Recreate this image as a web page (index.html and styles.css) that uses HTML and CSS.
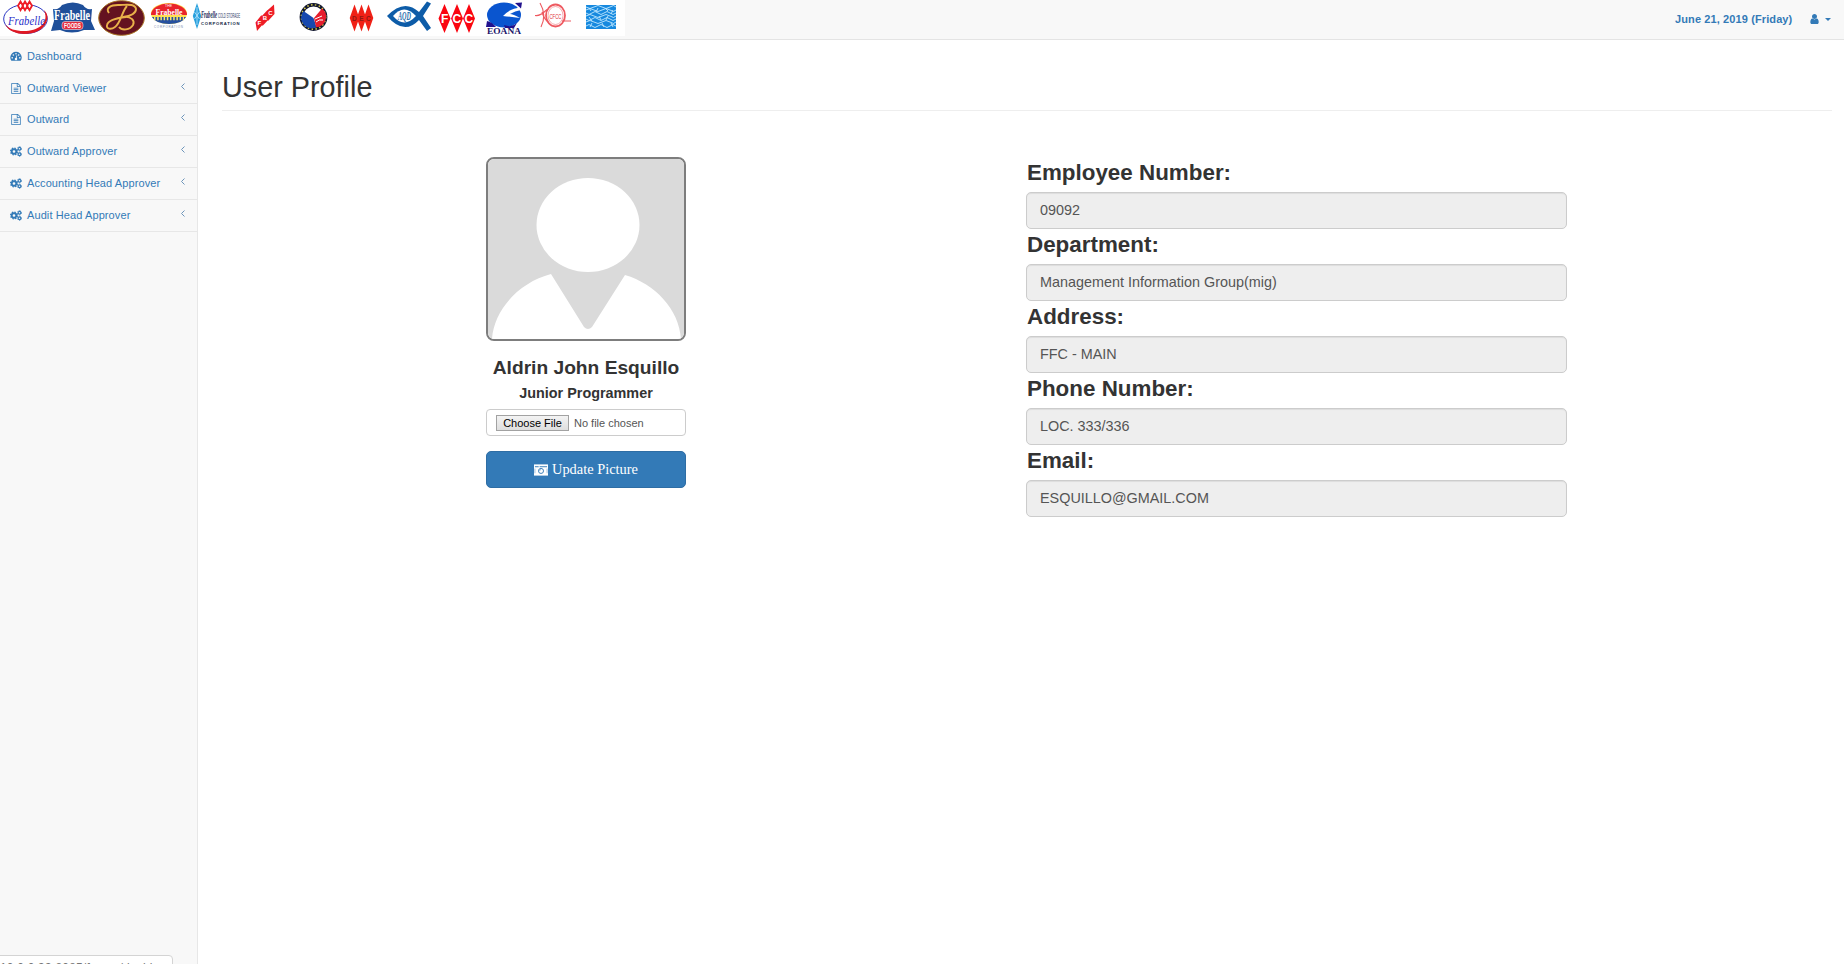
FILE: index.html
```html
<!DOCTYPE html>
<html lang="en">
<head>
<meta charset="utf-8">
<title>User Profile</title>
<link rel="stylesheet" href="styles.css">
</head>
<body>
<svg width="0" height="0" class="defs">
  <symbol id="file" viewBox="0 0 1792 1792"><path d="M1596 380q28 28 48 76t20 88v1152q0 40-28 68t-68 28h-1344q-40 0-68-28t-28-68v-1600q0-40 28-68t68-28h896q40 0 88 20t76 48zm-444-244v376h376q-10-29-22-41l-313-313q-12-12-41-22zm384 1528v-1024h-416q-40 0-68-28t-28-68v-416h-768v1536h1280zm-1024-864q0-14 9-23t23-9h704q14 0 23 9t9 23v64q0 14-9 23t-23 9h-704q-14 0-23-9t-9-23v-64zm736 224q14 0 23 9t9 23v64q0 14-9 23t-23 9h-704q-14 0-23-9t-9-23v-64q0-14 9-23t23-9h704zm0 256q14 0 23 9t9 23v64q0 14-9 23t-23 9h-704q-14 0-23-9t-9-23v-64q0-14 9-23t23-9h704z"/></symbol>
  <symbol id="cogs" viewBox="0 0 24 22"><g fill="none" stroke="currentColor"><circle cx="8" cy="11" r="4.500" stroke-width="3.600"/><circle cx="8" cy="11" r="6.900" stroke-width="2.400" stroke-dasharray="3 2.420"/><circle cx="19" cy="5.500" r="2.700" stroke-width="2.200"/><circle cx="19" cy="5.500" r="4.200" stroke-width="1.500" stroke-dasharray="2.400 2"/><circle cx="19" cy="16.500" r="2.700" stroke-width="2.200"/><circle cx="19" cy="16.500" r="4.200" stroke-width="1.500" stroke-dasharray="2.400 2"/></g></symbol>
  <symbol id="dash" viewBox="0 0 22 18"><path d="M2.500 17A10.500 10.500 0 1 1 19.500 17Z" fill="currentColor"/><g fill="#f8f8f8"><circle cx="4" cy="11.500" r="1.500"/><circle cx="6.200" cy="6.300" r="1.500"/><circle cx="11" cy="4" r="1.500"/><circle cx="15.800" cy="6.300" r="1.500"/><circle cx="18" cy="11.500" r="1.500"/><circle cx="11" cy="13.500" r="2.300"/><path d="M10.300 13L12 6.800l1.300.3-1.500 6.300z"/></g></symbol>
</svg>
<header class="topbar">
  <div class="logos">
    <svg viewBox="0 0 48 39"><ellipse cx="25.500" cy="19" rx="21.800" ry="14.500" fill="#fff" stroke="#2b36c4"/><path d="M5 24c6 14 35 13 41-1 3-6 1-10-2-13 6 14-7 21-20 21C15 31 9 29 5 24z" fill="#e01822"/><g fill="#fff" stroke="#ee1c25" stroke-width="1.800"><path d="M20.500 1.500l2.500 4.300-2.500 4.300-2.500-4.300zM25 1.500l2.500 4.300-2.500 4.300-2.500-4.300zM29.500 1.500L32 5.800l-2.500 4.300L27 5.800z"/></g><text x="8" y="24.500" textLength="37" lengthAdjust="spacingAndGlyphs" class="script" font-size="13" fill="#2a31c9">Frabelle</text></svg>
    <svg viewBox="0 0 48 39"><path d="M5 9q6 1 9-4 11-5 21 0 3 5 9 4l-1 12 4 9-11 0q-12 5-24 0l-9 1 3-10z" fill="#1f4f99"/><text x="6" y="20" textLength="36" lengthAdjust="spacingAndGlyphs" class="serif" font-weight="bold" font-size="15" fill="#fff">Frabelle</text><rect x="14" y="21.500" width="21" height="8" rx="3" fill="#e42b3d" stroke="#fff" stroke-width=".5"/><text x="16" y="28" textLength="17" lengthAdjust="spacingAndGlyphs" class="sans" font-weight="bold" font-size="6.500" fill="#fff">FOODS</text></svg>
    <svg viewBox="0 0 48 39"><ellipse cx="25.500" cy="18" rx="22.800" ry="17.300" fill="#641220" stroke="#a97524"/><g fill="none" stroke="#e9b24a" stroke-width="1.900"><path d="M13 13c-4-5 2-8 9-8 8 0 17-2 18 4 0 5-6 7-13 8 9-1 12 4 10 8-3 5-11 6-14 2"/><path d="M31 6c-5 5-6 17-12 21-4 3-9 2-8-2 1-5 10-7 19-8"/></g></svg>
    <svg viewBox="0 0 48 39"><ellipse cx="25" cy="13.500" rx="18" ry="10.500" fill="#ffe04d"/><path d="M7 15a18 11.500 0 0 1 36 0z" fill="#e9232b"/><text x="11.500" y="14.500" textLength="27" lengthAdjust="spacingAndGlyphs" class="serif" font-weight="bold" font-size="9" fill="#fff">Frabelle</text><text x="21" y="7" class="sans" font-size="3.500" fill="#fff">THE</text><path d="M8 17h34q-4 7-17 7T8 17z" fill="#2650a0"/><path d="M10 18.500h30" stroke="#f7e46b" stroke-width="3.500" stroke-dasharray="1.500 1.700"/><text x="10" y="28" textLength="29" class="sans" font-size="3" fill="#7d8cae">CORPORATION</text></svg>
    <svg viewBox="0 0 50 39" class="wide"><path d="M5 3l4.200 13L5 29 .8 16z" fill="#279fdc"/><path d="M5 7v18M2.500 12l5 7m0-7l-5 7" stroke="#bde7ff" stroke-width=".8"/><text x="9" y="17.500" textLength="16" lengthAdjust="spacingAndGlyphs" class="script" font-weight="bold" font-size="9.500" fill="#16234e">Frabelle</text><text x="26" y="18" textLength="22" lengthAdjust="spacingAndGlyphs" class="sans" font-size="6.500" fill="#26335e">COLD STORAGE</text><text x="9" y="24.800" textLength="38.500" class="sans" font-weight="bold" font-size="4.200" fill="#111d42">CORPORATION</text></svg>
    <svg viewBox="0 0 48 39"><g fill="#ee1c25"><path d="M21.500 15l2 8.500-6.500 7.500-1.500-8.500zM27.500 10l2 8.500-7 7.500-2-8.500zM34 4.500l.5 9.500-6.500 7-2.500-9z"/></g><g class="sans" fill="#fff" font-size="6" font-weight="bold"><text x="17.500" y="25">F</text><text x="22.800" y="20">B</text><text x="28.300" y="14.500">C</text></g></svg>
    <svg viewBox="0 0 48 39"><circle cx="25.500" cy="17" r="12.200" fill="#fff" stroke="#11162e" stroke-width="3.400"/><circle cx="25.500" cy="17" r="12.200" fill="none" stroke="#d8cf4b" stroke-width="1.500" stroke-dasharray="1.500 2.400"/><path d="M15.500 11l10 7 3 9a10.500 10.500 0 0 1-13-16z" fill="#1748ae"/><path d="M26 18l8-9.500a10.500 10.500 0 0 1-6 18.700z" fill="#e61c2c"/><path d="M27 19l7-3M28 22q3-3 7-2" fill="none" stroke="#fff"/></svg>
    <svg viewBox="0 0 48 39"><path d="M18.500 4.500l4.800 13.500-4.800 13.500L13.700 18zM25.500 4.500L30.300 18l-4.800 13.500L20.700 18zM32.500 4.500L37.300 18l-4.800 13.500L27.700 18z" fill="#f02016"/><g class="sans" font-size="6.500" fill="#8e1a14" font-weight="bold"><text x="16" y="20.500">D</text><text x="23.200" y="20.500">E</text><text x="30" y="20.500">C</text></g></svg>
    <svg viewBox="0 0 48 39"><path d="M3 16Q20-2 35 12L43 1.500 47 3.500 39 16 47 28 43 31 35 20Q20 36 3 16z" fill="#0d5ca8"/><path d="M9 16q11-13 23 0-12 13-23 0z" fill="#fff"/><text x="14" y="20" textLength="13" lengthAdjust="spacingAndGlyphs" class="serif" font-style="italic" font-weight="bold" font-size="12" fill="#286fae">AQD</text></svg>
    <svg viewBox="0 0 48 39"><path d="M12.500 4l6 14.500-6 14.500-6-14.500zM25 4l6 14.500L25 33l-6-14.500zM37 4l6 14.500L37 33l-6-14.500z" fill="#fa0510"/><g class="sans" font-size="12" fill="#fff" font-weight="bold"><text x="9" y="23">F</text><text x="20.500" y="23">C</text><text x="32.500" y="23">C</text></g></svg>
    <svg viewBox="0 0 48 39"><ellipse cx="24" cy="15" rx="17" ry="12.500" fill="#0a55cf"/><path d="M41 7.500Q30 8 23 16q9 1 17 2-7-4-10-4 5-3 11-4z" fill="#fff"/><path d="M35 3l7-.5-1 6z" fill="#21118d"/><path d="M7 21q5 1 9 6l-10 0zM24 25q8 3 13-2l-3 5-9 0z" fill="#21118d"/><text x="7" y="34" textLength="34" lengthAdjust="spacingAndGlyphs" class="serif" font-weight="bold" font-size="7.500" fill="#1b1469">EOANA</text></svg>
    <svg viewBox="0 0 48 39"><g fill="none" stroke="#ee5960"><ellipse cx="27.500" cy="15.500" rx="9.500" ry="11" stroke-width="1.800"/><ellipse cx="27.500" cy="15.500" rx="7.500" ry="9" stroke-width=".5"/><path d="M12 3q7 12 1 24M7 15.500q5 1 12-6M14 12q2 7 7 11M34 21h9" stroke-width="1.100"/></g><text x="21.500" y="18.500" textLength="12" lengthAdjust="spacingAndGlyphs" class="sans" font-size="7.500" fill="#e02f38">CFCC</text></svg>
    <svg viewBox="0 0 48 39"><path d="M10 5h30v24H10z" fill="#1689df"/><g fill="none" stroke="#c0e8ff" stroke-width=".9"><path d="M10 7q4 3 8 0t8 0 8 0 6 0M10 10q4-3 8 0t8 0 8 0 6 0M10 13q3 3 6 0t6 0 6 0 6 0 6 0M10 16q4-3 8 0t8 0 8 0 6 0M10 19q3 3 6 0t6 0 6 0 6 0 6 0M10 22q4-3 8 0t8 0 8 0 6 0M10 26q3-3 6 0t6 0 6 0 6 0 6 0M13 8l2 3m7-3l-2 4m9-4l3 3M13 17l3 4m7-5l2 4m7-4l-2 4M16 23l-2 4m12-4l2 4m7-4l2 4M37 10l-2 4"/></g></svg>
  </div>
  <div class="account"><b>June 21, 2019 (Friday)</b>
    <svg class="user" viewBox="256 128 1280 1536"><path d="M1536 1399q0 109-62.500 187t-150.500 78h-854q-88 0-150.500-78t-62.500-187q0-85 8.500-160.500t31.500-152 58.500-131 94-89 134.500-34.500q131 128 313 128t313-128q76 0 134.500 34.500t94 89 58.500 131 31.500 152 8.500 160.500zm-256-887q0 159-112.500 271.500t-271.500 112.500-271.500-112.500-112.500-271.500 112.500-271.500 271.500-112.500 271.500 112.500 112.500 271.500z"/></svg>
    <svg class="caret" viewBox="0 0 6 3"><path d="M0 0h6L3 3z"/></svg>
  </div>
</header>
<div class="body">
  <nav class="sidebar">
    <a class="item first"><svg><use href="#dash"/></svg><span>Dashboard</span></a>
    <a class="item short"><svg><use href="#file"/></svg><span>Outward Viewer</span><svg class="angle" viewBox="0 0 4 7"><path d="M3.500.5l-3 3 3 3"/></svg></a>
    <a class="item"><svg><use href="#file"/></svg><span>Outward</span><svg class="angle" viewBox="0 0 4 7"><path d="M3.500.5l-3 3 3 3"/></svg></a>
    <a class="item"><svg><use href="#cogs"/></svg><span>Outward Approver</span><svg class="angle" viewBox="0 0 4 7"><path d="M3.500.5l-3 3 3 3"/></svg></a>
    <a class="item"><svg><use href="#cogs"/></svg><span>Accounting Head Approver</span><svg class="angle" viewBox="0 0 4 7"><path d="M3.500.5l-3 3 3 3"/></svg></a>
    <a class="item"><svg><use href="#cogs"/></svg><span>Audit Head Approver</span><svg class="angle" viewBox="0 0 4 7"><path d="M3.500.5l-3 3 3 3"/></svg></a>
  </nav>
  <main class="page">
    <h1>User Profile</h1>
    <div class="columns">
      <section class="profile">
        <svg class="avatar" viewBox="0 0 196 180"><path fill="#dadada" d="M0 0h196v180H0z"/><g fill="#fff"><ellipse cx="100" cy="66" rx="51.500" ry="47"/><path d="M4 180C6 150 32 123 63 115L96 168q4 4 8 0l33-52c30 9 54 34 56 64z"/></g></svg>
        <h2>Aldrin John Esquillo</h2>
        <h3>Junior Programmer</h3>
        <div class="file"><span class="choose">Choose File</span><span>No file chosen</span></div>
        <div class="update"><svg viewBox="0 0 15 12"><path fill="#fff" d="M0 0h15v12H0z"/><path d="M1 2.500h4M6 2.500h8" stroke="#337ab7"/><circle cx="7.500" cy="7" r="2.700" fill="none" stroke="#337ab7"/><path d="M7.500 5.500A1.500 1.500 0 0 0 6 7M1 4.500v5M14 4.500v5" fill="none" stroke="#337ab7" stroke-width=".5"/></svg><span>Update Picture</span></div>
      </section>
      <section class="fields">
        <label>Employee Number:</label><div class="input">09092</div>
        <label>Department:</label><div class="input">Management Information Group(mig)</div>
        <label>Address:</label><div class="input">FFC - MAIN</div>
        <label>Phone Number:</label><div class="input">LOC. 333/336</div>
        <label>Email:</label><div class="input">ESQUILLO@GMAIL.COM</div>
      </section>
    </div>
  </main>
</div>
<div class="status">10.0.0.33:8085/fsoms/dashboard</div>
</body>
</html>
```
FILE: styles.css
```css
* { box-sizing: border-box; }
body { margin: 0; height: 964px; overflow: hidden; display: flex; flex-direction: column; font-family: "Liberation Sans", Arial, sans-serif; color: #333; background: #fff; }
.defs { position: absolute; }
.topbar { height: 40px; flex: none; display: flex; justify-content: space-between; background: #f8f8f8; border-bottom: 1px solid #e4e4e4; }
.logos { display: flex; width: 625px; height: 36px; background: #fff; }
.logos svg { width: 48px; height: 39px; flex: none; overflow: visible; }
.logos .wide { width: 50px; margin-right: -2px; }
.script { font-family: "Liberation Serif", serif; font-style: italic; }
.serif { font-family: "Liberation Serif", serif; }
.sans { font-family: "Liberation Sans", sans-serif; }
.account { display: flex; align-items: center; height: 38px; padding-right: 13px; color: #337ab7; font-size: 11px; }
.account b { width: 117px; white-space: nowrap; margin-right: 18px; letter-spacing: .11px; }
.account svg { fill: #337ab7; }
.user { width: 9px; height: 10px; }
.caret { width: 6px; height: 3px; margin-left: 6px; }
.body { flex: 1; display: flex; }
.sidebar { width: 198px; background: #f8f8f8; border-right: 1px solid #e7e7e7; }
.item { height: 32px; padding: 0 12px 1px 10px; display: flex; align-items: center; border-bottom: 1px solid #e7e7e7; color: #337ab7; fill: #337ab7; font-size: 11px; letter-spacing: .1px; }
.item.first { height: 33px; padding-bottom: 0; }
.item.short { height: 31px; padding-bottom: 0; }
.item svg { width: 12px; height: 11px; margin-right: 5px; flex: none; }
.item span { flex: 1; white-space: nowrap; }
.item .angle { width: 4px; height: 7px; margin: 0 0 3px; fill: none; stroke: #6d95ba; }
.page { flex: 1; padding: 30px 12px 0 24px; }
h1 { margin: 0 0 46px; height: 41px; border-bottom: 1px solid #eee; font-size: 28.800px; font-weight: 400; line-height: 35px; }
.columns { display: flex; padding-left: 264px; gap: 340px; }
.profile { width: 200px; display: flex; flex-direction: column; text-align: center; }
.avatar { width: 200px; height: 184px; border: 2px solid #7d7d7d; border-radius: 8px; }
h2 { margin: 15px 0 0; font-size: 19.200px; line-height: 24px; white-space: nowrap; }
h3 { margin: 4px 0 0; font-size: 14.400px; line-height: 18px; white-space: nowrap; }
.file { height: 27px; margin-top: 7px; padding-left: 9px; border: 1px solid #ccc; border-radius: 4px; display: flex; align-items: center; gap: 5px; font-size: 11px; color: #555; white-space: nowrap; }
.choose { width: 73px; height: 16px; line-height: 14px; border: 1px solid #a2a2a2; background: linear-gradient(#f3f3f3, #dedede); color: #000; }
.update { height: 37px; margin-top: 15px; border-radius: 5px; background: #337ab7; border: 1px solid #2e6da4; color: #fff; font-family: "Liberation Serif", serif; font-size: 14.400px; display: flex; align-items: center; justify-content: center; gap: 4px; white-space: nowrap; }
.update svg { width: 14px; height: 12px; }
.fields { width: 541px; }
label { display: block; height: 35px; padding: 2px 0 0 1px; font-size: 22.400px; font-weight: 700; line-height: 27px; }
.input { height: 37px; padding-left: 13px; border: 1px solid #ccc; border-radius: 5px; background: #eee; box-shadow: inset 0 1px 1px rgba(0,0,0,.075); color: #555; font-size: 14.400px; line-height: 35px; }
.status { position: absolute; left: -1px; top: 955px; width: 174px; height: 20px; padding-top: 5px; border: 1px solid #d4d4d4; border-radius: 0 4px 0 0; background: #fff; color: #777; font-size: 12px; letter-spacing: .2px; line-height: 14px; white-space: nowrap; overflow: hidden; }
```
